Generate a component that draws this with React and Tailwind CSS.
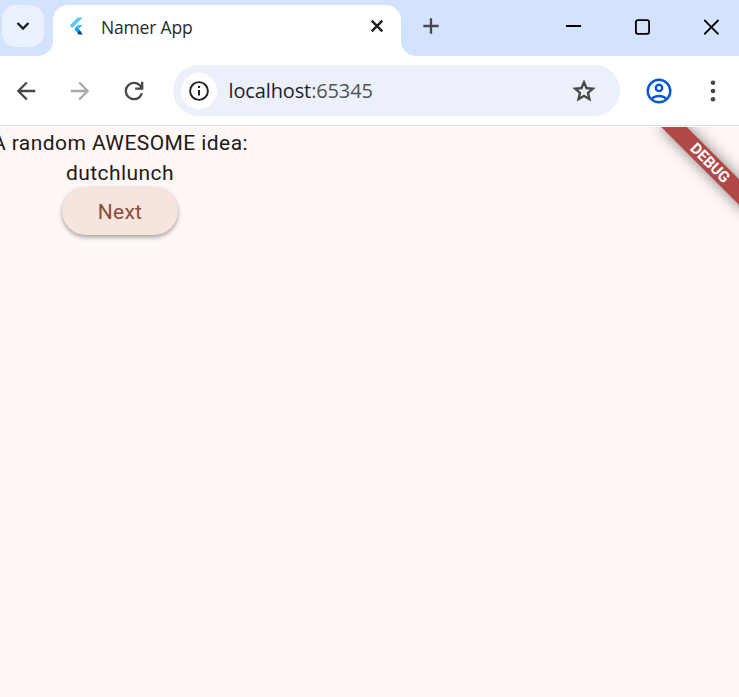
function Icon({ d, size, className, viewBox = "0 -960 960 960" }) {
  return (
    <svg width={size} height={size} viewBox={viewBox} className={className} fill="currentColor">
      <path d={d} />
    </svg>
  );
}

function FlutterLogo() {
  return (
    <svg width="16" height="19" viewBox="0 0 16 19">
      <path d="M8.8 0.5H13.8L3.2 11L0.7 8.6Z" fill="#54c9fa" />
      <path d="M8.8 8H13.8L8.4 13.2L5.600 10.900Z" fill="#47c5fb" />
      <path d="M5.4 12.6L8 10.2L10.8 13L8.300 15.400Z" fill="#00a5f5" />
      <path d="M8.300 15.400L10.800 13L13.800 17.600H9.400Z" fill="#07459a" />
    </svg>
  );
}

function TabStrip() {
  return (
    <header className="flex h-14 shrink-0 bg-[#d3e2fd]">
      <div className="relative w-[53px] pl-[2px] pt-[5px]">
        <button className="flex h-[42px] w-[42px] items-center justify-center rounded-[14px] bg-[#ebf2ff] text-[#1f1f1f]">
          <svg width="14" height="10" viewBox="0 0 14 10" fill="none" stroke="currentColor" strokeWidth="2.4">
            <path d="M1.5 2L7 7.5L12.5 2" />
          </svg>
        </button>
        <svg className="absolute bottom-0 right-0" width="15" height="15"><path d="M15 0V15H0A15 15 0 0 0 15 0Z" fill="#fff" /></svg>
      </div>
      <div className="mt-[5px] flex w-[348px] items-start rounded-t-[15px] bg-white pl-4 pr-[17px]">
        <div className="mt-[12px]"><FlutterLogo /></div>
        <span className="ml-4 mt-[10px] font-['Open_Sans','Noto_Sans',sans-serif] text-[17.5px] leading-6 tracking-[-0.18px] text-[#2a2a2a]">Namer App</span>
        <svg className="ml-auto mt-[14px]" width="14" height="14" viewBox="0 0 14 14" fill="none" stroke="#1f1f1f" strokeWidth="2.4">
          <path d="M1.7 1.7L12.3 12.3M12.3 1.7L1.7 12.3" />
        </svg>
      </div>
      <div className="relative flex flex-1">
        <svg className="self-end" width="15" height="15"><path d="M0 0V15H15A15 15 0 0 1 0 0Z" fill="#fff" /></svg>
        <svg className="ml-[7px] mt-[18px]" width="16" height="16" stroke="#474747" strokeWidth="2.3"><path d="M8 0.3V15.7M0.3 8H15.7" /></svg>
        <svg className="ml-[127px] mt-[18px]" width="15" height="16" stroke="#000" strokeWidth="2"><path d="M0 8H15" /></svg>
        <svg className="ml-[54px] mt-[19px]" width="15" height="16" fill="none" stroke="#000" strokeWidth="1.8"><rect x="0.9" y="1.1" width="13.2" height="13.7" rx="2" /></svg>
        <svg className="ml-[54px] mt-[19px]" width="16" height="16" stroke="#000" strokeWidth="1.8"><path d="M0.2 1L14.5 15.3M14.5 1L0.2 15.3" /></svg>
      </div>
    </header>
  );
}

function Toolbar() {
  return (
    <div className="flex h-[69px] shrink-0 items-center bg-white">
      <Icon size={28} className="ml-3 shrink-0 text-[#474747]" d="m313-440 224 224-57 56-320-320 320-320 57 56-224 224h487v80H313Z" />
      <Icon size={28} className="ml-[26px] shrink-0 text-[#a9a9a9]" d="M647-440H160v-80h487L423-744l57-56 320 320-320 320-57-56 224-224Z" />
      <Icon size={28} className="ml-[26px] shrink-0 text-[#474747]" d="M480-160q-134 0-227-93t-93-227q0-134 93-227t227-93q69 0 132 28.500T720-690v-110h80v280H520v-80h168q-32-56-87.500-88T480-720q-100 0-170 70t-70 170q0 100 70 170t170 70q77 0 139-44t87-116h84q-28 106-114 173t-196 67Z" />
      <div className="ml-[25px] flex h-[51px] w-[447px] shrink-0 items-center rounded-full bg-[#ecf0fa] pl-[8px] pr-[22px]">
        <div className="flex h-9 w-9 items-center justify-center rounded-full bg-white text-[#1f1f1f]">
          <svg width="20" height="20" viewBox="0 0 20 20" fill="none">
            <circle cx="10" cy="10" r="8.9" stroke="currentColor" strokeWidth="1.9" />
            <path d="M10 9V14.600M10 5V7.100" stroke="currentColor" strokeWidth="2" />
          </svg>
        </div>
        <span className="ml-[11.500px] font-['Open_Sans','Noto_Sans',sans-serif] text-[20px] leading-7 tracking-[-0.13px] text-[#1f1f1f]">
          localhost<span className="text-[#505357]">:65345</span>
        </span>
        <Icon size={28} className="ml-auto text-[#474747]" d="m354-287 126-76 126 77-33-144 111-96-146-13-58-136-58 135-146 13 111 97-33 143ZM233-120l65-281L80-590l288-25 112-265 112 265 288 25-218 189 65 281-247-149-247 149Zm247-350Z" />
      </div>
      <Icon size={30} className="ml-6 shrink-0 text-[#0b57d0]" d="M234-276q51-39 114-61.500T480-360q69 0 132 22.500T726-276q35-41 54.500-93T800-480q0-133-93.500-226.500T480-800q-133 0-226.500 93.500T160-480q0 59 19.500 111t54.500 93Zm246-164q-59 0-99.500-40.500T340-580q0-59 40.500-99.500T480-720q59 0 99.500 40.500T620-580q0 59-40.500 99.500T480-440Zm0 360q-83 0-156-31.500T197-197q-54-54-85.500-127T80-480q0-83 31.500-156T197-763q54-54 127-85.500T480-880q83 0 156 31.500T763-763q54 54 85.500 127T880-480q0 83-31.500 156T763-197q-54 54-127 85.500T480-80Zm0-80q53 0 100-15.500t86-44.500q-39-29-86-44.500T480-280q-53 0-100 15.500T294-220q39 29 86 44.500T480-160Zm0-360q26 0 43-17t17-43q0-26-17-43t-43-17q-26 0-43 17t-17 43q0 26 17 43t43 17Zm0-60Zm0 360Z" />
      <svg className="ml-[36px] shrink-0" width="6" height="22" fill="#474747">
        <circle cx="3" cy="2.700" r="2.300" /><circle cx="3" cy="11" r="2.300" /><circle cx="3" cy="19.200" r="2.300" />
      </svg>
    </div>
  );
}

export default function App() {
  return (
    <div className="flex h-[697px] w-[739px] flex-col overflow-hidden bg-[#d3e2fd]">
      <TabStrip />
      <Toolbar />
      <main className="relative flex-1 overflow-hidden border-t border-[#dadfe0] bg-[#fff8f6] font-[Roboto,sans-serif]">
        <div className="h-px bg-white" />
        <div className="-ml-[8px] flex w-[256px] flex-col items-center whitespace-nowrap pt-px text-[21px] font-normal leading-[30px] tracking-[0.43px] text-[#231917]">
          <p>A random AWESOME idea:</p>
          <p>dutchlunch</p>
          <button className="-mt-px h-12 w-[116px] rounded-full bg-[#f6e4df] pt-px tracking-[0.3px] text-[#8f4c38] shadow-[0_3px_4px_rgba(0,0,0,0.24),0_1px_4px_rgba(0,0,0,0.14)]">Next</button>
        </div>
        <div className="absolute inset-x-0 bottom-0 top-px overflow-hidden">
          <div className="absolute left-[650px] top-[27px] flex h-[18px] w-[120px] rotate-45 items-center justify-center bg-[#b04848] text-[15.300px] font-bold leading-[18px] text-white shadow-[0_0_15px_rgba(0,0,0,0.5)]">DEBUG</div>
        </div>
      </main>
    </div>
  );
}
